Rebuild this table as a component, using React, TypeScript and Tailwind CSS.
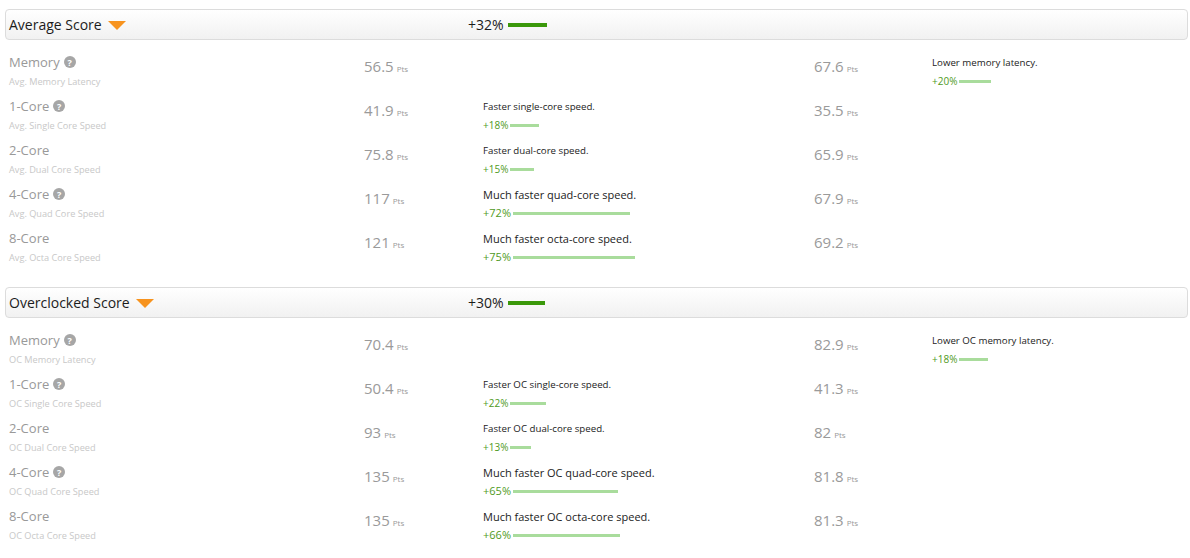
import React from "react";

type Row = {
  name: string;
  sub: string;
  help?: boolean;
  left: string;
  right: string;
  leftNote?: { text: string; pct: number; big?: boolean };
  rightNote?: { text: string; pct: number; big?: boolean };
};

type Section = {
  title: string;
  pct: number;
  rows: Row[];
};

const SECTIONS: Section[] = [
  {
    title: "Average Score",
    pct: 32,
    rows: [
      { name: "Memory", sub: "Avg. Memory Latency", help: true, left: "56.5", right: "67.6", rightNote: { text: "Lower memory latency.", pct: 20 } },
      { name: "1-Core", sub: "Avg. Single Core Speed", help: true, left: "41.9", right: "35.5", leftNote: { text: "Faster single-core speed.", pct: 18 } },
      { name: "2-Core", sub: "Avg. Dual Core Speed", left: "75.8", right: "65.9", leftNote: { text: "Faster dual-core speed.", pct: 15 } },
      { name: "4-Core", sub: "Avg. Quad Core Speed", help: true, left: "117", right: "67.9", leftNote: { text: "Much faster quad-core speed.", pct: 72, big: true } },
      { name: "8-Core", sub: "Avg. Octa Core Speed", left: "121", right: "69.2", leftNote: { text: "Much faster octa-core speed.", pct: 75, big: true } },
    ],
  },
  {
    title: "Overclocked Score",
    pct: 30,
    rows: [
      { name: "Memory", sub: "OC Memory Latency", help: true, left: "70.4", right: "82.9", rightNote: { text: "Lower OC memory latency.", pct: 18 } },
      { name: "1-Core", sub: "OC Single Core Speed", help: true, left: "50.4", right: "41.3", leftNote: { text: "Faster OC single-core speed.", pct: 22 } },
      { name: "2-Core", sub: "OC Dual Core Speed", left: "93", right: "82", leftNote: { text: "Faster OC dual-core speed.", pct: 13 } },
      { name: "4-Core", sub: "OC Quad Core Speed", help: true, left: "135", right: "81.8", leftNote: { text: "Much faster OC quad-core speed.", pct: 65, big: true } },
      { name: "8-Core", sub: "OC Octa Core Speed", left: "135", right: "81.3", leftNote: { text: "Much faster OC octa-core speed.", pct: 66, big: true } },
    ],
  },
];

function HelpIcon() {
  return (
    <span className="ml-[4px] inline-flex h-[12px] w-[12px] items-center justify-center rounded-full bg-[#a6a6a6] text-[9px] font-bold leading-none text-white">
      ?
    </span>
  );
}

function Score({ value }: { value: string }) {
  return (
    <div className="flex items-baseline pt-[3px] text-[#9a9a9a]">
      <span className="text-[15px] leading-[20px]">{value}</span>
      <span className="ml-[3px] text-[8px]">Pts</span>
    </div>
  );
}

function Note({ note }: { note?: Row["leftNote"] }) {
  if (!note) return <div />;
  return (
    <div className="pt-[1px]">
      <div className={`${note.big ? "text-[11px]" : "text-[9.7px]"} leading-[18px] text-[#222]`}>{note.text}</div>
      <div className="flex items-center">
        <span className={`${note.big ? "text-[11px]" : "text-[10px]"} leading-[18px] text-[#4f9a1c]`}>+{note.pct}%</span>
        <span className="ml-[2px] h-[3px] bg-[#a9dc9c]" style={{ width: `${Math.round(note.pct * 1.62)}px` }} />
      </div>
    </div>
  );
}

function ScoreSection({ section }: { section: Section }) {
  return (
    <section>
      <div className="ml-[5px] mr-[2px] flex h-[31px] items-center rounded-[4px] border border-[#dcdcdc] bg-gradient-to-b from-white to-[#f1f1f1]">
        <div className="flex w-[462px] items-center pl-[3px]">
          <span className="text-[14px] text-[#1c1c1c]">{section.title}</span>
          <span className="ml-[6px] mt-[2px] h-0 w-0 border-x-[9px] border-t-[9px] border-x-transparent border-t-[#f7931e]" />
        </div>
        <span className="text-[14px] text-[#1c1c1c]">+{section.pct}%</span>
        <span className="ml-[4px] h-[4px] bg-[#3a980a]" style={{ width: `${Math.round(section.pct * 1.22)}px` }} />
      </div>
      <div className="pb-[14px] pt-[13px]">
        {section.rows.map((row) => (
          <div key={row.name} className="grid h-[44px] grid-cols-[355px_119px_331px_118px_1fr] pl-[9px]">
            <div>
              <div className="flex items-center text-[13px] leading-[18px] text-[#999]">
                {row.name}
                {row.help ? <HelpIcon /> : null}
              </div>
              <div className="mt-[4px] text-[9.2px] leading-[14px] text-[#c8c8c8]">{row.sub}</div>
            </div>
            <Score value={row.left} />
            <Note note={row.leftNote} />
            <Score value={row.right} />
            <Note note={row.rightNote} />
          </div>
        ))}
      </div>
    </section>
  );
}

export default function App() {
  return (
    <div className="min-h-[558px] bg-white pt-[9px] font-['Open_Sans',sans-serif]">
      {SECTIONS.map((section) => (
        <ScoreSection key={section.title} section={section} />
      ))}
    </div>
  );
}
